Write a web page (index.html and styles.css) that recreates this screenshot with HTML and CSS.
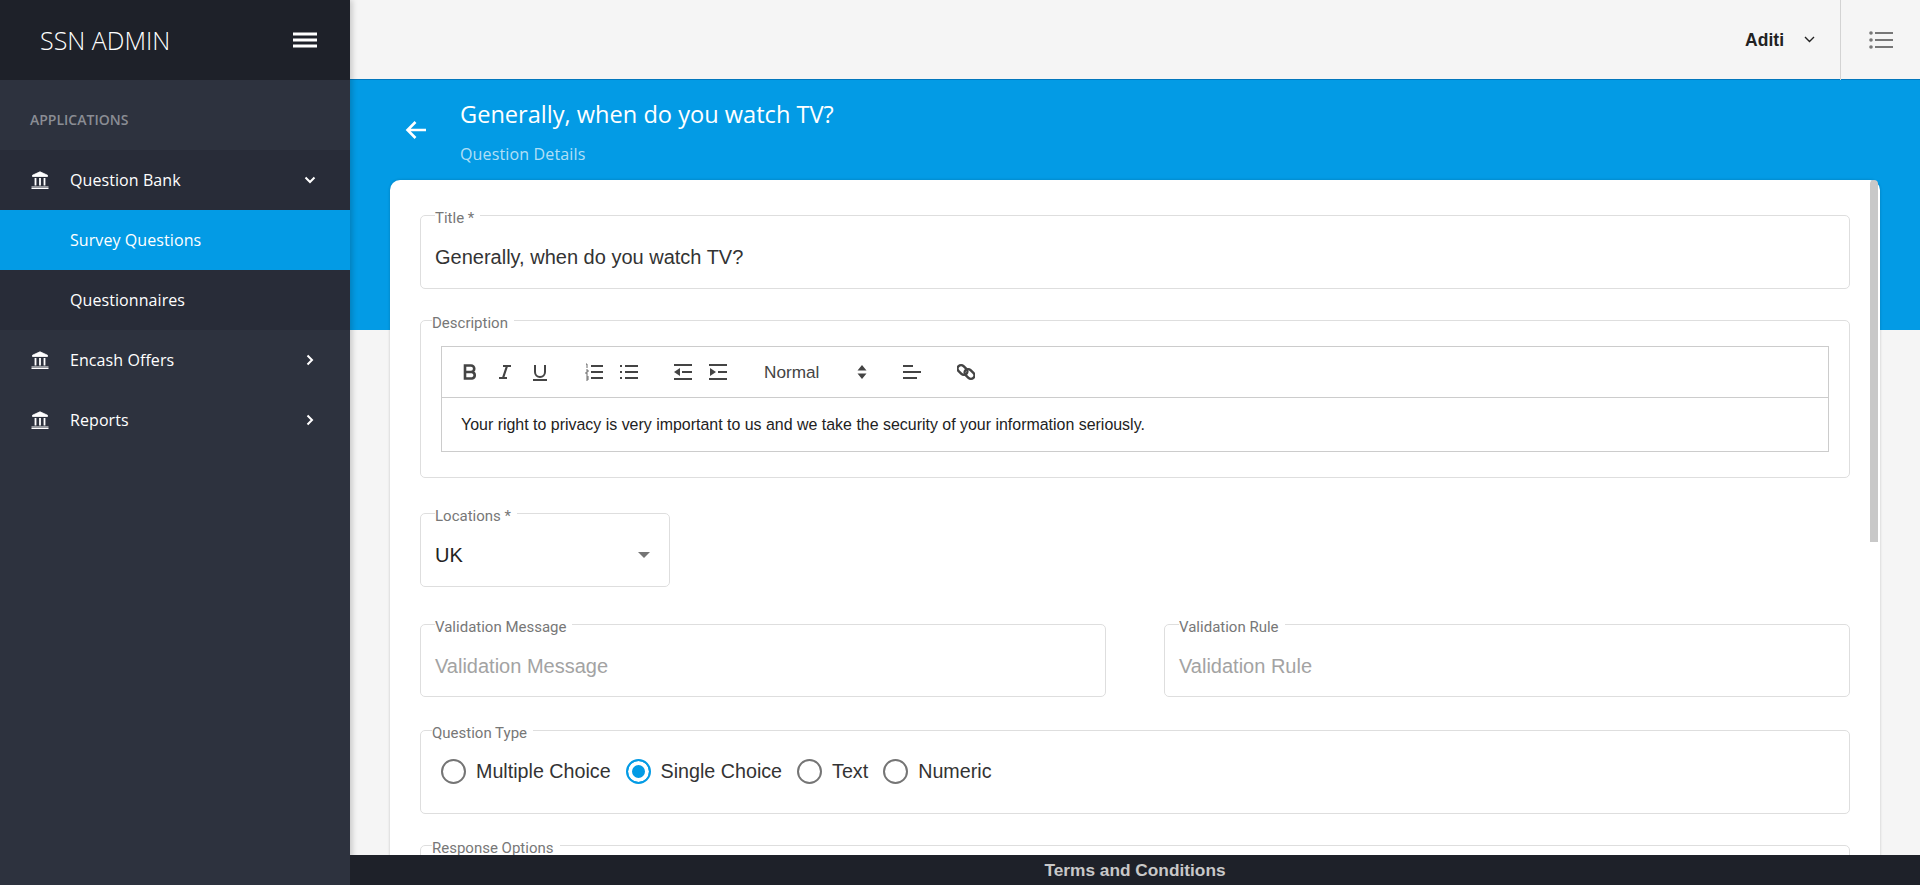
FILE: index.html
```html
<!DOCTYPE html>
<html lang="en">
<head>
    <meta charset="UTF-8">
    <title>SSN Admin</title>
    <link rel="stylesheet" href="styles.css">
</head>
<body>
    <div class="app">
        <aside class="sidebar">
            <div class="brand">
                <span class="brand-name">SSN ADMIN</span>
                <svg class="burger" width="24" height="16" viewBox="0 0 24 16"><path d="M0 2h24M0 8h24M0 14h24" stroke="#fff" stroke-width="3"/></svg>
            </div>
            <div class="nav-title">APPLICATIONS</div>
            <div class="nav-group">
                <div class="nav-item">
                    <svg class="bank" width="18" height="18" viewBox="0 0 18 18"><path d="M9 .8L16.500 4.200v1.300h-15V4.200z" fill="#fff" stroke="#fff" stroke-width=".8"/><path d="M.5 16h17M.5 17.500h17" stroke="#fff" stroke-width="1"/><path d="M4.500 7v7.500M9 7v7.500M13.500 7v7.500" stroke="#fff" stroke-width="1.800"/></svg>
                    <span class="nav-label">Question Bank</span>
                    <svg width="12" height="8" viewBox="0 0 12 8"><path d="M1.500 1.500L6 6l4.500-4.500" fill="none" stroke="#fff" stroke-width="2"/></svg>
                </div>
                <div class="nav-item sub active"><span class="nav-label">Survey Questions</span></div>
                <div class="nav-item sub"><span class="nav-label">Questionnaires</span></div>
            </div>
            <div class="nav-item">
                <svg class="bank" width="18" height="18" viewBox="0 0 18 18"><path d="M9 .8L16.500 4.200v1.300h-15V4.200z" fill="#fff" stroke="#fff" stroke-width=".8"/><path d="M.5 16h17M.5 17.500h17" stroke="#fff" stroke-width="1"/><path d="M4.500 7v7.500M9 7v7.500M13.500 7v7.500" stroke="#fff" stroke-width="1.800"/></svg>
                <span class="nav-label">Encash Offers</span>
                <svg class="chev-right" width="8" height="12" viewBox="0 0 8 12"><path d="M1.500 1.500L6 6l-4.500 4.500" fill="none" stroke="#fff" stroke-width="2"/></svg>
            </div>
            <div class="nav-item">
                <svg class="bank" width="18" height="18" viewBox="0 0 18 18"><path d="M9 .8L16.500 4.200v1.300h-15V4.200z" fill="#fff" stroke="#fff" stroke-width=".8"/><path d="M.5 16h17M.5 17.500h17" stroke="#fff" stroke-width="1"/><path d="M4.500 7v7.500M9 7v7.500M13.500 7v7.500" stroke="#fff" stroke-width="1.800"/></svg>
                <span class="nav-label">Reports</span>
                <svg class="chev-right" width="8" height="12" viewBox="0 0 8 12"><path d="M1.500 1.500L6 6l-4.500 4.500" fill="none" stroke="#fff" stroke-width="2"/></svg>
            </div>
        </aside>

        <main class="main">
            <div class="topbar">
                <span class="user">Aditi</span>
                <svg class="user-chev" width="11" height="7" viewBox="0 0 11 7"><path d="M1 1l4.500 4.500L10 1" fill="none" stroke="#222" stroke-width="1.400"/></svg>
                <div class="quick">
                    <svg width="24" height="18" viewBox="0 0 24 18"><path d="M6 2h18M6 9h18M6 16h18" stroke="#777" stroke-width="2"/><circle cx="2" cy="2" r="1.800" fill="#777"/><circle cx="2" cy="9" r="1.800" fill="#777"/><circle cx="2" cy="16" r="1.800" fill="#777"/></svg>
                </div>
            </div>

            <div class="hero">
                <svg class="back" width="22" height="20" viewBox="0 0 22 20"><path d="M21 10H3M10.500 2L2.500 10l8 8" fill="none" stroke="#fff" stroke-width="2.600"/></svg>
                <div>
                    <div class="hero-title">Generally, when do you watch TV?</div>
                    <div class="hero-sub">Question Details</div>
                </div>
            </div>

            <div class="card">
                <fieldset class="field">
                    <legend>Title *</legend>
                    <div class="value">Generally, when do you watch TV?</div>
                </fieldset>

                <fieldset class="field group desc">
                    <legend>Description</legend>
                    <div class="editor">
                        <div class="toolbar">
                            <span class="tool-set">
                                <svg width="18" height="18" viewBox="0 0 18 18"><path d="M4 2.500h6a3.200 3.200 0 0 1 0 6.500H4zM4 9h7a3.300 3.300 0 0 1 0 6.500H4z" fill="none" stroke="#444" stroke-width="2.600"/></svg>
                                <svg width="18" height="18" viewBox="0 0 18 18"><path d="M7 3h8M3 15h8M11 3L7 15" fill="none" stroke="#444" stroke-width="2.200"/></svg>
                                <svg width="18" height="18" viewBox="0 0 18 18"><path d="M4 2v7a5 5 0 0 0 10 0V2M2 17h14" fill="none" stroke="#444" stroke-width="2"/></svg>
                            </span>
                            <span class="tool-set">
                                <svg width="18" height="18" viewBox="0 0 18 18"><path d="M6 3h12M6 9h12M6 15h12" stroke="#444" stroke-width="2"/><path d="M1 1h1v4M1 7h2v2H1v2h2M1 13h2v4H1M1 15h2" fill="none" stroke="#444" stroke-width=".8"/></svg>
                                <svg width="18" height="18" viewBox="0 0 18 18"><path d="M5 3h13M5 9h13M5 15h13M0 3h2M0 9h2M0 15h2" stroke="#444" stroke-width="2"/></svg>
                            </span>
                            <span class="tool-set">
                                <svg width="18" height="18" viewBox="0 0 18 18"><path d="M0 2h18M8 9h10M0 16h18" stroke="#444" stroke-width="2"/><path d="M6 5v8L0 9z" fill="#444"/></svg>
                                <svg width="18" height="18" viewBox="0 0 18 18"><path d="M0 2h18M0 16h18M9 9h9" stroke="#444" stroke-width="2"/><path d="M1 5v8l6-4z" fill="#444"/></svg>
                            </span>
                            <span class="format">
                                <span>Normal</span>
                                <svg width="10" height="14" viewBox="0 0 10 14"><path d="M5 0l4.500 5.500h-9zM5 14L.5 8.500h9z" fill="#444"/></svg>
                            </span>
                            <svg class="tool-align" width="18" height="18" viewBox="0 0 18 18"><path d="M0 3h10M0 9h18M0 15h14" stroke="#444" stroke-width="2"/></svg>
                            <svg class="tool-link" width="18" height="18" viewBox="0 0 18 18"><g fill="none" stroke="#444" stroke-width="2.400"><rect x="0" y="3.500" width="11" height="7" rx="3.500" transform="rotate(45 5.500 7)"/><rect x="7" y="7.500" width="11" height="7" rx="3.500" transform="rotate(45 12.500 11)"/></g></svg>
                        </div>
                        <div class="editor-text">Your right to privacy is very important to us and we take the security of your information seriously.</div>
                    </div>
                </fieldset>

                <fieldset class="field locations">
                    <legend>Locations *</legend>
                    <div class="value select">
                        <span>UK</span>
                        <span class="caret"></span>
                    </div>
                </fieldset>

                <div class="two-col">
                    <fieldset class="field">
                        <legend>Validation Message</legend>
                        <div class="value placeholder">Validation Message</div>
                    </fieldset>
                    <fieldset class="field">
                        <legend>Validation Rule</legend>
                        <div class="value placeholder">Validation Rule</div>
                    </fieldset>
                </div>

                <fieldset class="field group types">
                    <legend>Question Type</legend>
                    <div class="radios">
                        <span class="radio"><span class="dot"></span>Multiple Choice</span>
                        <span class="radio checked"><span class="dot"></span>Single Choice</span>
                        <span class="radio"><span class="dot"></span>Text</span>
                        <span class="radio"><span class="dot"></span>Numeric</span>
                    </div>
                </fieldset>

                <fieldset class="field group options">
                    <legend>Response Options</legend>
                </fieldset>

                <div class="scrollbar"></div>
            </div>

            <div class="footer">Terms and Conditions</div>
        </main>
    </div>
</body>
</html>
```

FILE: styles.css
```css
* {
    box-sizing: border-box;
}
body {
    margin: 0;
    height: 885px;
    overflow: hidden;
    font-family: 'Liberation Sans', Arial, sans-serif;
    background-color: #f5f5f5;
}
.app {
    display: flex;
    height: 885px;
}

/* sidebar */
.sidebar {
    width: 350px;
    flex-shrink: 0;
    background-color: #2d323e;
    color: #fff;
    font-family: 'Open Sans', sans-serif;
    box-shadow: 2px 0 6px rgba(0, 0, 0, 0.2);
    position: relative;
    z-index: 2;
}
.brand {
    height: 80px;
    background-color: #1e2129;
    display: flex;
    align-items: center;
    justify-content: space-between;
    padding: 0 33px 0 40px;
}
.brand-name {
    font-size: 25px;
    font-weight: 300;
}
.nav-title {
    height: 70px;
    padding: 30px 0 0 30px;
    font-size: 14px;
    font-weight: 600;
    color: #8a8d94;
}
.nav-group {
    background-color: #282c38;
}
.nav-item {
    height: 60px;
    display: flex;
    align-items: center;
    padding: 0 34px 0 31px;
    font-size: 16px;
}
.nav-item.sub {
    padding-left: 70px;
}
.nav-item.active {
    background-color: #039be5;
}
.nav-label {
    flex: 1;
    letter-spacing: 0.08px;
}
.bank {
    margin-right: 21px;
}
.chev-right {
    margin-right: 2px;
}

/* main column */
.main {
    flex: 1;
    min-width: 0;
    position: relative;
    overflow: hidden;
}
.topbar {
    height: 80px;
    display: flex;
    align-items: center;
    justify-content: flex-end;
    background-color: #f5f5f5;
    border-bottom: 1px solid #0277bd;
}
.user {
    margin-top: 2px;
    font-size: 17.5px;
    font-weight: bold;
    color: #222;
}
.user-chev {
    margin: 0 25px 0 20px;
}
.quick {
    width: 80px;
    height: 80px;
    border-left: 1px solid #d3d3d3;
    display: flex;
    align-items: center;
    justify-content: center;
}
.hero {
    height: 250px;
    background-color: #039be5;
    color: #fff;
    display: flex;
    align-items: flex-start;
    padding: 19px 0 0 55px;
    font-family: 'Open Sans', sans-serif;
}
.back {
    margin: 21px 33px 0 0;
}
.hero-title {
    font-size: 23.6px;
    line-height: 30px;
}
.hero-sub {
    font-size: 16px;
    letter-spacing: 0.15px;
    margin-top: 14px;
    color: rgba(255, 255, 255, 0.7);
}

/* form card */
.card {
    position: relative;
    margin: -150px 40px 0;
    height: 720px;
    padding: 27px 30px 0;
    background-color: #fff;
    border-radius: 10px 10px 0 0;
    box-shadow: 0 0 3px rgba(0, 0, 0, 0.2);
}
.scrollbar {
    position: absolute;
    top: 0;
    right: 2px;
    width: 8px;
    height: 362px;
    background-color: #c8c8c8;
    border-radius: 4px 4px 0 0;
}
.field {
    margin: 0 0 23px;
    padding: 0 14px;
    min-width: 0;
    height: 82px;
    border: 1px solid #dedede;
    border-radius: 5px;
}
.field legend {
    padding: 6px 6px 0 0;
    font-family: Roboto, sans-serif;
    font-size: 15px;
    line-height: 10px;
    color: #777;
    font-weight: 400;
}
.value {
    padding-top: 21px;
    font-size: 20px;
    line-height: 26px;
    color: #333;
}
.placeholder {
    color: #a3a3a3;
}
.group {
    padding: 0 20px;
}
.group legend {
    margin-left: -9px;
}
.desc {
    height: 166px;
    margin-bottom: 27px;
}
.editor {
    margin-top: 18px;
    border: 1px solid #ccc;
}
.toolbar {
    height: 51px;
    padding: 0 19px;
    display: flex;
    align-items: center;
    border-bottom: 1px solid #ccc;
}
.tool-set {
    display: flex;
    gap: 17px;
    margin-right: 36px;
}
.tool-set svg {
    display: block;
}
.format {
    width: 106px;
    display: flex;
    justify-content: space-between;
    align-items: center;
    font-size: 17.2px;
    color: #444;
    margin: 0 33px 0 1px;
    padding-right: 3px;
}
.tool-align {
    margin-right: 36px;
}
.editor-text {
    height: 53px;
    padding-left: 19px;
    font-size: 15.95px;
    line-height: 54px;
    color: #222;
}
.locations {
    width: 250px;
    margin-bottom: 29px;
}
.select {
    display: flex;
    align-items: center;
    justify-content: space-between;
    color: #222;
    padding-right: 5px;
}
.two-col {
    display: grid;
    grid-template-columns: 686px 686px;
    justify-content: space-between;
}
.two-col .field {
    height: 81px;
    margin-bottom: 25px;
}
.caret {
    width: 0;
    height: 0;
    border-left: 6px solid transparent;
    border-right: 6px solid transparent;
    border-top: 6px solid #757575;
}
.types {
    height: 92px;
    margin-bottom: 23px;
}
.radios {
    display: flex;
    gap: 15px;
    padding-top: 21px;
    font-size: 19.7px;
    color: #333;
}
.radio {
    display: flex;
    align-items: center;
    gap: 10px;
}
.dot {
    width: 25px;
    height: 25px;
    border: 2px solid #757575;
    border-radius: 50%;
}
.checked .dot {
    border-color: #039be5;
    background-color: #039be5;
    box-shadow: inset 0 0 0 4px #fff;
}
.footer {
    position: absolute;
    left: 0;
    right: 0;
    bottom: 0;
    height: 30px;
    background-color: #1e2129;
    color: #c8c8c8;
    font-size: 17.3px;
    font-weight: bold;
    line-height: 30px;
    text-align: center;
    z-index: 3;
}
```
